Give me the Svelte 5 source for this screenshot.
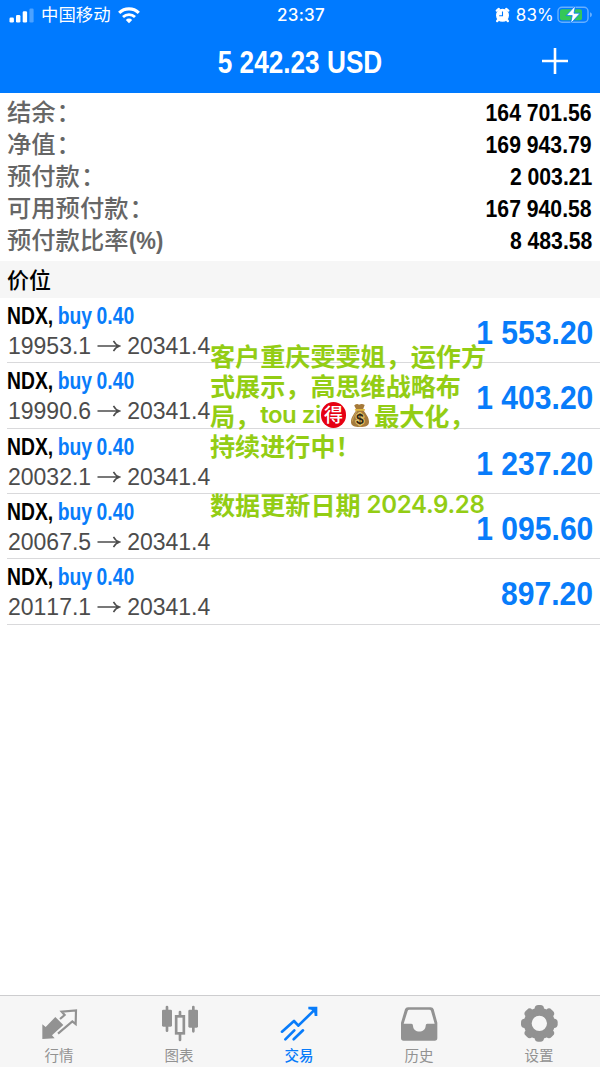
<script>
  const balance = '5 242.23 USD'

  const summary = [
    { label: '结余', suffix: '：', value: '164 701.56' },
    { label: '净值', suffix: '：', value: '169 943.79' },
    { label: '预付款', suffix: '：', value: '2 003.21' },
    { label: '可用预付款', suffix: '：', value: '167 940.58' },
    { label: '预付款比率', unit: '(%)', value: '8 483.58' },
  ]

  const positions = [
    { symbol: 'NDX', side: 'buy 0.40', open: '19953.1', current: '20341.4', profit: '1 553.20' },
    { symbol: 'NDX', side: 'buy 0.40', open: '19990.6', current: '20341.4', profit: '1 403.20' },
    { symbol: 'NDX', side: 'buy 0.40', open: '20032.1', current: '20341.4', profit: '1 237.20' },
    { symbol: 'NDX', side: 'buy 0.40', open: '20067.5', current: '20341.4', profit: '1 095.60' },
    { symbol: 'NDX', side: 'buy 0.40', open: '20117.1', current: '20341.4', profit: '897.20' },
  ]

  const tabs = [
    { id: 'quotes', label: '行情' },
    { id: 'charts', label: '图表' },
    { id: 'trade', label: '交易' },
    { id: 'history', label: '历史' },
    { id: 'settings', label: '设置' },
  ]

  let active = $state('trade')

  const teeth = [0, 45, 90, 135, 180, 225, 270, 315]
</script>

<div class="screen">
  <header>
    <div class="status">
      <div class="carrier">
        <svg width="25" height="15" viewBox="0 0 25 15" fill="#fff">
          <rect x="0.5" y="9.5" width="4.4" height="5" rx="1.3" />
          <rect x="7" y="7" width="4.4" height="7.5" rx="1.3" />
          <rect x="13.7" y="3.2" width="4.4" height="11.3" rx="1.3" />
          <rect x="20.4" y="0.5" width="4.2" height="14" rx="1.3" opacity="0.3" />
        </svg>
        <span>中国移动</span>
        <svg width="22" height="17" viewBox="0 0 22 17" fill="none" stroke="#fff" stroke-width="3.2">
          <path d="M1.2 5.8a14.2 14.2 0 0 1 19.6 0" />
          <path d="M5 10.1a8.7 8.7 0 0 1 12 0" stroke-width="2.8" />
          <path d="M11 16.3l-3.2-3.4a4.6 4.6 0 0 1 6.4 0z" fill="#fff" stroke="none" />
        </svg>
      </div>
      <span class="time">23:37</span>
      <div class="power">
        <svg width="15" height="16" viewBox="0 0 15 16">
          <path d="M1.8 3.6l2-1.6M13.2 3.6l-2-1.6M3 13l-.8 1M12 13l.8 1" stroke="#fff" stroke-width="2.4" stroke-linecap="round" />
          <circle cx="7.5" cy="8.3" r="6.5" fill="#fff" />
          <path d="M7.5 4.5v4.2H4.2" fill="none" stroke="#007aff" stroke-width="1.1" />
        </svg>
        <span>83%</span>
        <svg width="36" height="20" viewBox="0 0 36 20">
          <rect x="1" y="2.2" width="30" height="15" rx="4" fill="none" stroke="#fff" stroke-opacity="0.4" stroke-width="1.4" />
          <path d="M33 7.2q2 .6 2 2.5t-2 2.5z" fill="#fff" opacity="0.4" />
          <rect x="3" y="4.2" width="22" height="11" rx="2" fill="#35c759" />
          <path d="M18.5 0.5L9.2 10.6h6L13.5 18.8l9.6-10.6H17z" fill="#fff" stroke="#007aff" stroke-width="0.8" />
        </svg>
      </div>
    </div>
    <div class="navbar">
      <h1>{balance}</h1>
      <button class="add" aria-label="add">
        <svg width="26" height="26" viewBox="0 0 26 26" stroke="#fff" stroke-width="2.6">
          <path d="M13 0v26M0 13h26" />
        </svg>
      </button>
    </div>
  </header>

  <dl class="summary">
    {#each summary as item}
      <div class="line">
        <dt>{item.label}{#if item.suffix}<span class="colon">{item.suffix}</span>{/if}{#if item.unit}<span class="unit">{item.unit}</span>{/if}</dt>
        <dd>{item.value}</dd>
      </div>
    {/each}
  </dl>

  <h2>价位</h2>

  <main>
    <ul>
      {#each positions as p}
        <li>
          <div class="deal">
            <div class="name">{p.symbol}, <span>{p.side}</span></div>
            <div class="prices">
              <span>{p.open}</span>
              <svg width="24" height="14" viewBox="0 0 24 14" fill="none" stroke="#4c4c4c" stroke-width="1.5">
                <path d="M0.5 7h22M16.5 1.8q2 4 6 5.2q-4 1.2-6 5.2" />
              </svg>
              <span>{p.current}</span>
            </div>
          </div>
          <div class="profit">{p.profit}</div>
        </li>
      {/each}
    </ul>

    <!-- caption laid over the list -->
    <div class="note">
      <p>客户重庆雯雯姐，运作方</p>
      <p>式展示，高思维战略布</p>
      <p>
        局，<span class="latin">tou zi</span><span class="bargain">得</span><svg class="bag" width="20" height="25" viewBox="0 0 20 25">
          <path d="M6 6L4.2 2.4Q7 .2 9 1.7q3-1.7 5.7.3L13 6.4z" fill="#a57939" />
          <path d="M6.4 7C4.2 11 1 14 1 19c0 4 3.5 5 9 5s9-1 9-5c0-5-3.3-8-5.7-12z" fill="#a57a3b" />
          <path d="M6.8 8C5 12 2.3 14 2.3 18.6" fill="none" stroke="#c49a55" stroke-width="1.2" />
          <path d="M5.6 6.8h8.6" stroke="#e2ba42" stroke-width="1.7" stroke-linecap="round" />
          <text x="10" y="20.5" text-anchor="middle" fill="#342512" stroke="#e6c66a" stroke-width="2" paint-order="stroke">$</text>
        </svg>最大化，
      </p>
      <p>持续进行中！</p>
      <p class="updated">数据更新日期 <span class="latin">2024.9.28</span></p>
    </div>
  </main>

  <nav>
    {#each tabs as tab}
      <button class="tab" class:active={active === tab.id} onclick={() => (active = tab.id)}>
        <svg width="40" height="40" viewBox="0 0 120 120" fill="currentColor" stroke="none">
          {#if tab.id === 'quotes'}
            <path d="M7 61l10 8L46 39l24 24-34 31 8 9-37 2z" />
            <path d="M54 89L97 52l10 8 1-41-43 4 9 10-14 12" fill="none" stroke="currentColor" stroke-width="6.5" />
          {:else if tab.id === 'charts'}
            <rect x="6" y="17" width="30" height="51" rx="4" />
            <rect x="85" y="17" width="29" height="54" rx="4" />
            <rect x="48.5" y="37" width="23" height="51" fill="none" stroke="currentColor" stroke-width="8" />
            <path d="M21 9v71M100 9v73M60 24v11M60 90v18" stroke="currentColor" stroke-width="8" stroke-linecap="round" />
          {:else if tab.id === 'trade'}
            <g fill="none" stroke="currentColor" stroke-width="8" stroke-linecap="round" stroke-linejoin="round">
              <path d="M6 83L42 51l13 14 47-46" />
              <path d="M16 106l27-27M41 106l28-27" />
            </g>
            <path d="M85 8h27v28h-8l-1-10-9-9-9-1z" />
          {:else if tab.id === 'history'}
            <path fill-rule="evenodd" d="M24 10H92q7 0 9 6l11 40v46q0 8-8 8H11q-8 0-8-8V56L15 16q2-6 9-6zM28 17q-4 0-5 4L11 59H34q5 0 5 6c0 23 38 23 38 0q0-6 5-6h22L93 21q-1-4-5-4z" />
          {:else}
            <circle cx="58" cy="58" r="35" fill="none" stroke="currentColor" stroke-width="24" />
            {#each teeth as angle}
              <rect x="44" y="3" width="28" height="26" rx="11" transform="rotate({angle} 58 58)" />
            {/each}
          {/if}
        </svg>
        <span>{tab.label}</span>
      </button>
    {/each}
  </nav>
</div>

<style>
  :global(body) {
    background: #fff;
  }
  .screen {
    display: flex;
    flex-direction: column;
    width: 600px;
    height: 1067px;
    overflow: hidden;
    font-family: 'Liberation Sans', 'Noto Sans CJK SC', sans-serif;
    font-kerning: none;
    color: #000;
  }
  h1,
  h2,
  p,
  ul,
  dl,
  dd {
    margin: 0;
    padding: 0;
  }
  button {
    padding: 0;
    border: none;
    background: none;
  }
  svg {
    display: block;
  }

  header {
    height: 93px;
    flex: none;
    background: #007aff;
    color: #fff;
  }
  .status {
    display: grid;
    grid-template-columns: 1fr auto 1fr;
    align-items: center;
    height: 30px;
    padding: 0 7px 0 9px;
    font: 500 17px/30px Inter, 'Noto Sans CJK SC', sans-serif;
  }
  .carrier,
  .power {
    display: flex;
    align-items: center;
  }
  .carrier span {
    margin: 0 7px;
    font-size: 17.4px;
    font-weight: 400;
  }
  .time {
    font-size: 17px;
    letter-spacing: 0.3px;
  }
  .power {
    justify-content: flex-end;
  }
  .power span {
    margin: 0 3px 0 6px;
    font-weight: 400;
    letter-spacing: 0.2px;
  }
  .navbar {
    display: grid;
    grid-template-columns: 90px 1fr 90px;
    align-items: center;
    height: 63px;
  }
  h1 {
    grid-column: 2;
    font-size: 31px;
    line-height: 65px;
    text-align: center;
    transform: scaleX(0.845);
  }
  .add {
    display: flex;
    justify-content: center;
    padding-bottom: 3px;
  }

  .summary {
    padding: 3px 8px 5px 7px;
  }
  .line {
    display: flex;
    justify-content: space-between;
    height: 32px;
    line-height: 33px;
  }
  dt {
    height: 32px;
    font: 500 24.3px/30px 'Noto Sans CJK SC', sans-serif;
    color: #666;
  }
  .colon {
    margin-left: 1px;
  }
  .unit {
    display: inline-block;
    margin-left: 1px;
    font-family: 'Liberation Sans', sans-serif;
    font-weight: 700;
    transform: scaleX(0.91);
    transform-origin: left;
  }
  dd {
    font-size: 24.5px;
    font-weight: 700;
    transform: scaleX(0.865);
    transform-origin: right;
  }
  h2 {
    box-sizing: border-box;
    height: 37px;
    padding-left: 7px;
    background: #f6f6f6;
    font: 500 22px/35px 'Noto Sans CJK SC', sans-serif;
  }

  main {
    position: relative;
    flex: 1;
  }
  ul {
    list-style: none;
  }
  li {
    display: flex;
    justify-content: space-between;
    box-sizing: border-box;
    height: 65.33px;
    margin-left: 7px;
    padding-right: 7px;
    border-bottom: 1px solid #d9d9db;
  }
  .name {
    padding-top: 3px;
    font-size: 23px;
    font-weight: 700;
    line-height: 30px;
    word-spacing: -1px;
    transform: scaleX(0.84);
    transform-origin: left;
    white-space: nowrap;
  }
  .name span,
  .profit {
    color: #087cfa;
  }
  .prices {
    display: flex;
    align-items: center;
    gap: 6px;
    padding-left: 1px;
    font-size: 23px;
    line-height: 30px;
    color: #4c4c4c;
  }
  .profit {
    font-size: 34px;
    font-weight: 700;
    line-height: 68px;
    transform: scaleX(0.885);
    transform-origin: right;
  }

  .note {
    position: absolute;
    top: 42px;
    left: 210px;
    font: 700 25.1px/30px 'Noto Sans CJK SC', sans-serif;
    color: #93cd14;
    white-space: nowrap;
  }
  .note p {
    display: flex;
    align-items: center;
    height: 30px;
  }
  .note .updated {
    margin-top: 29px;
  }
  .latin {
    font-family: Inter, sans-serif;
    font-weight: 600;
    font-size: 24px;
    letter-spacing: -0.5px;
    white-space: pre;
  }
  .updated .latin {
    margin-left: 6px;
    padding-top: 2px;
    letter-spacing: -0.3px;
  }
  .bargain {
    width: 25.5px;
    height: 25.5px;
    border-radius: 50%;
    background: #e60012;
    color: #fff;
    font-size: 19px;
    font-weight: 500;
    line-height: 24px;
    text-align: center;
  }
  .bag {
    margin: 0 4px;
  }
  .bag text {
    font: 700 14px 'Liberation Sans', sans-serif;
  }

  nav {
    display: flex;
    flex: none;
    box-sizing: border-box;
    height: 72px;
    border-top: 1px solid #cdcdcf;
    background: #f6f6f6;
  }
  .tab {
    display: flex;
    flex: 1;
    flex-direction: column;
    align-items: center;
    padding-top: 8px;
    color: #929292;
  }
  .tab.active {
    color: #087cfa;
  }
  .tab span {
    margin-right: 2px;
    font: 400 14.5px/22px 'Noto Sans CJK SC', sans-serif;
  }
  .tab.active span {
    font-weight: 500;
  }
</style>
